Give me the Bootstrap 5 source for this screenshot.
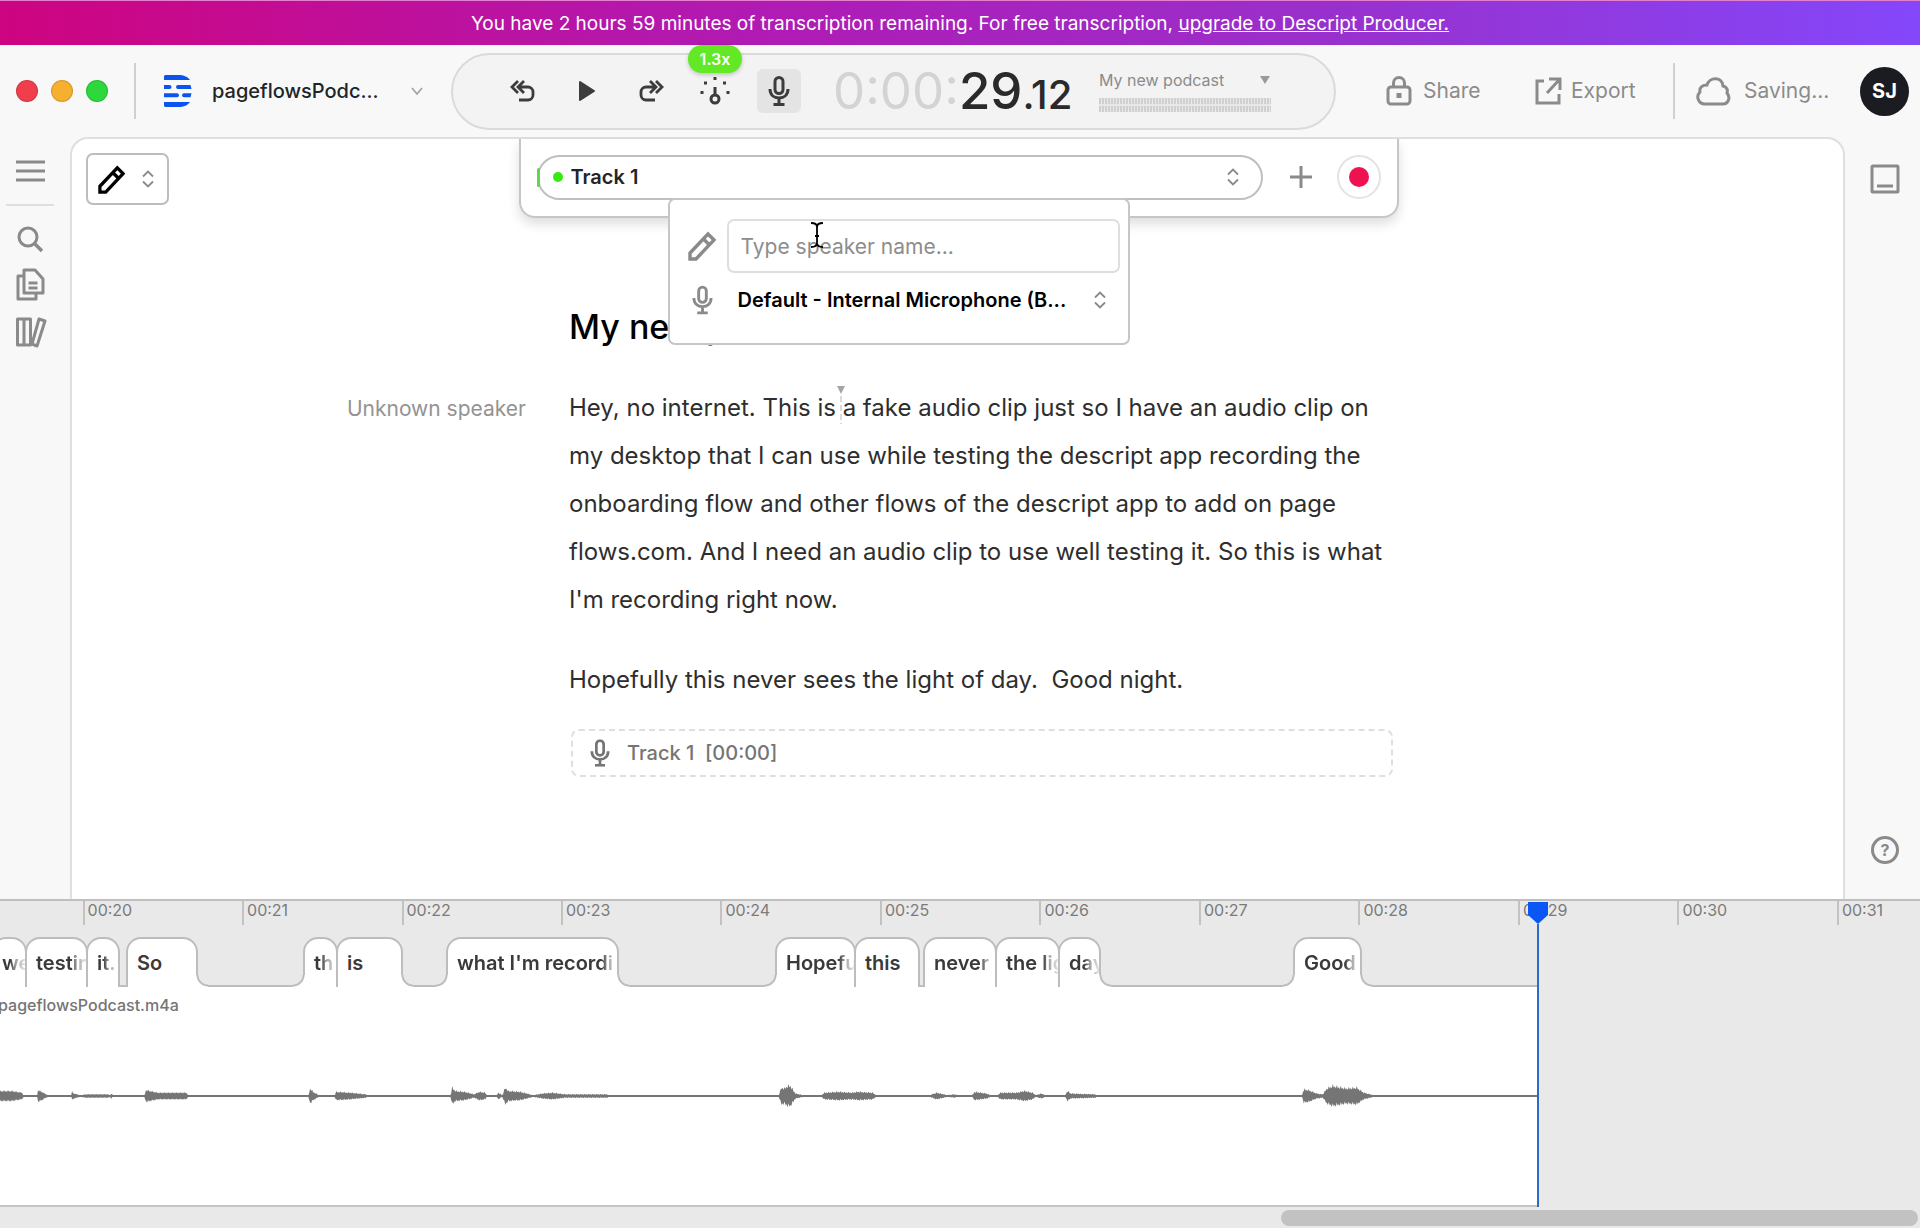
<!DOCTYPE html>
<html lang="en">
<head>
<meta charset="utf-8">
<meta name="viewport" content="width=device-width, initial-scale=1">
<title>pageflowsPodcast</title>
<link href="https://cdn.jsdelivr.net/npm/bootstrap@5.3.0/dist/css/bootstrap.min.css" rel="stylesheet">
<style>
body{font-family:Inter,"Liberation Sans",sans-serif;background:#f8f8f8;color:#2b2b2b;font-size:20px;line-height:28px}
button,select,input{font-family:inherit}
svg{display:block;flex:none}
.bare{border:0;background:none;padding:0;color:inherit}
select.bare{appearance:none;outline:0}
.promo{height:45px;padding-top:2px;background:linear-gradient(90deg,#ce0480 0%,#b01bb4 40%,#9a2fcb 68%,#8447fa 100%);border-top:1px solid #e57fd0;color:#fff;font-size:19px}
.topbar{height:92px;color:#8b8b8b}
.brand{width:451px;padding-left:16px}
.lights{gap:13px}
.light{width:22px;height:22px;border-radius:50%;border:1px solid #0002}
.project{width:216px;margin-left:16px}
.vline{width:2px;height:56px;background:#d0d0d0}
.transport{height:77px;border:2px solid #dadada;border-radius:39px;background:#f3f3f3;color:#3c3c3c;padding-left:48px}
.tools{gap:20px}
.tool{width:44px;height:44px;border-radius:6px;place-items:center}
.tool-on{background:#e4e4e4}
.speed{top:-24px;left:50%;transform:translateX(-50%);background:#62e825;color:#fff;font-size:16px;font-weight:600;line-height:28px;width:54px;border-radius:14px;box-shadow:0 2px 4px #0003}
.clock{font-size:51px;line-height:56px;font-weight:500;color:#2a2a2a;margin-left:32px;width:266px;padding-top:4px}
.clock-dim{color:#d3d3d3;font-weight:400}
.clock-sub{font-size:40px}
.meter{width:172px;height:14px;background:repeating-linear-gradient(90deg,#d0d0d0 0 2px,#e8e8e8 2px 3px)}
.meter::after{content:"";display:block;position:relative;top:6px;height:2px;background:#e8e8e8}
.comp{font-size:16px;line-height:20px;color:#8b8b8b;width:161px}
.actions{width:584px;padding-left:50px;padding-right:11px;font-size:21px}
.me{width:49px;height:49px;border-radius:50%;background:#1b1c22;color:#fff;font-weight:700;font-size:20px}
.rail{color:#8a8a8a}
.rail-l{width:70px;padding:23px 0 0 16px}
.rail-r{width:75px;padding:27px 0 34px 25px}
.rule{width:48px;height:2px;background:#dedede;margin-left:-10px}
.editor{background:#fff;border:2px solid #dfdfdf;border-bottom:0;border-radius:18px 18px 0 0}
.mode{left:14px;top:14px;width:83px;height:52px;border:2px solid #bdbdbd;border-radius:7px;background:#fff;color:#000}
.recorder-row{padding-left:2px}
.recorder{width:880px;height:79px;background:#fff;border:2px solid #c6c6c6;border-top:0;border-radius:0 0 16px 16px;box-shadow:0 6px 12px #0002;padding:0 16px 1px}
.track{height:45px;border:2px solid #bfbfbf;border-radius:23px;padding-left:14px;padding-right:21px}
.track::before{content:"";position:absolute;left:-2px;top:11px;width:3px;height:19px;border-radius:3px;background:#5fd64e}
.live{width:10px;height:10px;border-radius:50%;background:#35e912}
.rec{width:44px;height:44px;border:2px solid #e3e3e3;border-radius:50%;background:#fff;place-items:center}
.rec i{width:20px;height:20px;border-radius:50%;background:#ee1250}
.pop{left:147px;top:59px;width:462px;height:147px;background:#fff;border:2px solid #c6c6c6;border-radius:7px;padding:19px 8px 0 18px;z-index:3;color:#8a8a8a}
.pop input{height:54px;border:2px solid #dedede;border-radius:7px;padding:0 12px;font-size:21px;color:#333;background:#fff;outline:0}
.pop input::placeholder{color:#8d8d8d;opacity:1}
.ibeam{left:289px;top:83px;z-index:4}
.page-grid{display:grid;grid-template-columns:minmax(0,1fr) minmax(0,828px) minmax(0,403px);column-gap:43px;padding-top:164px}
.title{font-size:34px;line-height:48px;font-weight:500;color:#000;margin-bottom:33px}
.prose{font-size:24px;line-height:48px;color:#2e2e2e;white-space:nowrap}
.prose p{margin-bottom:32px}
.speaker{font-size:21px;line-height:48px;color:#939393;padding-top:82px}
.caret-mark{left:0;top:-7px;margin-left:-6px}
.slot{margin:-7px 4px 0 2px;height:48px;border:2px dashed #dfdfdf;border-radius:8px;padding-left:17px;color:#757575;font-size:20px;font-weight:500}
.timeline{height:329px;background:#e9e9e9;border-top:2px solid #bfbfbf}
.ruler{height:36px;margin-left:4.3%}
.tick{flex:0 0 8.68%;height:24px;border-left:2px solid #c2c2c2;padding-left:3px;font-size:16px;line-height:18px;color:#7b7b7b}
.words{height:50px;border-bottom:2px solid #bdbdbd;width:80.1%}
.word{height:50px;background:#fff;border:2px solid #bdbdbd;border-bottom:0;border-radius:15px 15px 0 0;padding-left:9px;font-weight:600;font-size:20px;line-height:49px;color:#3a3a3a;flex:none;margin-right:-2px}
.word span{display:block;overflow:hidden;white-space:nowrap}
.word.cut span{-webkit-mask-image:linear-gradient(90deg,#000 calc(100% - 15px),#0007 calc(100% - 9px),#0002 100%);mask-image:linear-gradient(90deg,#000 calc(100% - 15px),#0007 calc(100% - 9px),#0002 100%)}
.fl::before,.fr::after{content:"";position:absolute;bottom:0;width:12px;height:12px}
.fl::before{left:-12px;background:radial-gradient(circle at 0 0,#e9e9e9 9px,#bdbdbd 10px,#bdbdbd 11px,#fff 12px)}
.fr::after{right:-12px;background:radial-gradient(circle at 100% 0,#e9e9e9 9px,#bdbdbd 10px,#bdbdbd 11px,#fff 12px)}
.clip{height:220px;width:80.1%;background:#fff;border-bottom:2px solid #c4c4c4;font-size:16px;font-weight:500;line-height:20px;color:#757575}
.clip-name{margin-left:-2px;padding-top:8px}
.wave{top:79px;left:0}
.head{left:80.1%;top:1px;width:20px;margin-left:-10px}
.head i{width:2px;height:283px;background:#2d6cc4}
.bar{height:16px;width:637px;border-radius:8px;background:#c2c2c2;margin:3px 2px 0 auto}
</style>
<script src="https://cdn.jsdelivr.net/npm/bootstrap@5.3.0/dist/js/bootstrap.bundle.min.js"></script>
</head>
<body class="vh-100 d-flex flex-column overflow-hidden">
<svg class="d-none">
 <symbol id="updown" viewBox="0 0 14 18"><path d="M2 6.500 7 1.500l5 5M2 11.500l5 5 5-5" fill="none" stroke="#8a8a8a" stroke-width="1.800"/></symbol>
 <symbol id="mic" viewBox="0 0 22 30"><rect x="7" y="1.500" width="8" height="16" rx="4" fill="none" stroke="currentColor" stroke-width="3"/><path d="M2 13c0 6 4 9 9 9s9-3 9-9M11 22v6M5.500 28.500h11" fill="none" stroke="currentColor" stroke-width="3"/></symbol>
 <symbol id="pencil" viewBox="0 0 28 30"><path d="M2 28v-6L20 3l6 6L8 28zM15.500 8l6 6" fill="none" stroke="currentColor" stroke-width="3.400"/></symbol>
 <symbol id="undo" viewBox="0 0 26 22"><path d="M8 1 2 7l6 6M14 1 8 7l6 6M9 7h9a5 5 0 0 1 5 5v3a5 5 0 0 1-5 5H9" fill="none" stroke="currentColor" stroke-width="2.800"/></symbol>
</svg>

<div class="promo d-flex align-items-center justify-content-center flex-shrink-0"><span class="text-nowrap">You have 2 hours 59 minutes of transcription remaining. For free transcription, <a href="#" class="text-white">upgrade to Descript Producer.</a></span></div>

<header class="topbar d-flex align-items-center flex-shrink-0">
 <div class="brand d-flex align-items-center flex-shrink-0">
  <span class="lights d-flex"><i class="light" style="background:#f03e4d"></i><i class="light" style="background:#f6b02f"></i><i class="light" style="background:#2dd83c"></i></span>
  <span class="vline" style="margin-left:26px"></span>
  <svg style="margin-left:28px" width="28" height="32" viewBox="0 0 28 32" fill="#0b55ee"><path d="M1 0h13c6 0 10 2 12 5H0V1zM0 27h26c-2 3-6 5-12 5H1l-1-1z"/><path d="M0 10h5.500a2 2 0 0 1 0 4H0zM14 10h12.500l1 4H14a2 2 0 0 1 0-4zM0 18.300h13a2 2 0 0 1 0 4H0zM20 18.300h7.500l-1 4H20a2 2 0 0 1 0-4z"/></svg>
  <button class="bare project d-flex align-items-center justify-content-between text-dark"><span class="fw-medium ps-1">pageflowsPodc...</span><svg width="14" height="9" viewBox="0 0 14 9"><path d="m2 1 5 6 5-6" fill="none" stroke="#a0a0a0" stroke-width="1.600"/></svg></button>
 </div>
 <div class="transport d-flex align-items-center flex-grow-1">
  <div class="tools d-flex align-items-center">
   <button class="bare tool d-grid" aria-label="Back"><svg width="26" height="22"><use href="#undo"/></svg></button>
   <button class="bare tool d-grid" aria-label="Play"><svg width="18" height="22" viewBox="0 0 18 22"><path d="M2 2v18l14-9z" fill="currentColor" stroke="currentColor" stroke-width="2" stroke-linejoin="round"/></svg></button>
   <button class="bare tool d-grid" aria-label="Forward"><svg width="26" height="22" viewBox="0 0 26 22"><g transform="matrix(-1 0 0 1 26 0)"><use href="#undo"/></g></svg></button>
   <button class="bare tool d-grid position-relative" aria-label="Speed"><svg width="30" height="30" viewBox="0 0 30 30" fill="currentColor"><path d="M13.500 1h3v3h-3zM4 5.500h3v3H4zM23 5.500h3v3h-3zM.5 15h3v3h-3zM26.500 15h3v3h-3zM13.500 11h3v8h-3z"/><circle cx="15" cy="23" r="4" fill="none" stroke="currentColor" stroke-width="3"/></svg><span class="speed position-absolute">1.3x</span></button>
   <button class="bare tool tool-on d-grid" aria-label="Record"><svg width="22" height="30"><use href="#mic"/></svg></button>
  </div>
  <div class="clock text-nowrap"><span class="clock-dim">0:00:</span>29<span class="clock-sub">.12</span></div>
  <div>
   <div class="d-flex align-items-center mb-2"><select class="bare comp" aria-label="Composition"><option>My new podcast</option></select><svg width="10" height="8" viewBox="0 0 10 8"><path d="M0 0h10L5 8z" fill="#9a9a9a"/></svg></div>
   <div class="meter"></div>
  </div>
 </div>
 <div class="actions d-flex align-items-center flex-shrink-0">
  <button class="bare d-flex align-items-center text-start" style="width:149px;gap:11px"><svg width="26" height="30" viewBox="0 0 26 30"><path d="M7.500 11V7a5.500 5.500 0 0 1 11 0v4" fill="none" stroke="currentColor" stroke-width="3"/><rect x="2" y="11" width="22" height="17" rx="3" fill="none" stroke="currentColor" stroke-width="3"/><path d="M10.500 17h5v5h-5z" fill="currentColor"/></svg>Share</button>
  <button class="bare d-flex align-items-center" style="width:138px;gap:9px"><svg width="27" height="28" viewBox="0 0 27 28"><path d="M9 4H2v22h22V17M14 2h11v11M24 3 12 16" fill="none" stroke="currentColor" stroke-width="3"/></svg>Export</button>
  <span class="vline"></span>
  <span class="d-flex align-items-center flex-grow-1" style="gap:13px;padding-left:20px"><svg width="36" height="30" viewBox="0 0 36 30"><path d="M9 28a7 7 0 0 1-4-12c-1-5 3-7 7-7 2-8 15-9 16 1 4 1 5 4 4 7 4 5 1 11-4 11z" fill="none" stroke="currentColor" stroke-width="3"/></svg>Saving...</span>
  <button class="bare me">SJ</button>
 </div>
</header>

<main class="d-flex flex-grow-1 overflow-hidden">
 <nav class="rail rail-l flex-shrink-0">
  <svg width="29" height="22" viewBox="0 0 29 22"><path d="M0 2h29M0 11h29M0 20h29" stroke="currentColor" stroke-width="3"/></svg>
  <div class="rule" style="margin-top:22px"></div>
  <svg width="28" height="28" viewBox="0 0 28 28" style="margin-top:20px"><circle cx="12" cy="11" r="9" fill="none" stroke="currentColor" stroke-width="3"/><path d="m18 17 8 8" stroke="currentColor" stroke-width="3.500"/></svg>
  <svg width="30" height="34" viewBox="0 0 30 34" style="margin-top:14px"><path d="M8 2h11l8 9v14H8zM8 8H2v23h18v-6M12.500 15h9M12.500 20h9" fill="none" stroke="currentColor" stroke-width="3" stroke-linejoin="round"/></svg>
  <svg width="32" height="31" viewBox="0 0 32 31" style="margin-top:15px"><path d="M1.500 2h13v26h-13zM8 2v26M23 2l6 2-8 25-5-2z" fill="none" stroke="currentColor" stroke-width="3" stroke-linejoin="round"/></svg>
 </nav>
 <section class="editor position-relative flex-grow-1">
  <button class="bare mode position-absolute d-flex align-items-center justify-content-between" style="padding:0 12px 0 9px"><svg width="29" height="29" viewBox="0 0 28 30"><use href="#pencil"/></svg><svg width="14" height="18"><use href="#updown"/></svg></button>
  <div class="recorder-row position-absolute start-0 end-0 top-0 d-flex justify-content-center">
   <div class="recorder position-relative d-flex align-items-center">
    <div class="track position-relative d-flex align-items-center flex-grow-1"><i class="live"></i><select class="bare flex-grow-1 fw-semibold ps-2 text-dark" aria-label="Track"><option>Track 1</option></select><svg width="14" height="18"><use href="#updown"/></svg></div>
    <button class="bare" aria-label="Add track" style="margin:0 25px 0 27px"><svg width="22" height="22"><path d="M11 0v22M0 11h22" stroke="#8a8a8a" stroke-width="3"/></svg></button>
    <button class="bare rec d-grid" aria-label="Record"><i></i></button>
    <div class="pop position-absolute">
     <div class="d-flex align-items-center"><label for="spk"><svg width="28" height="32" viewBox="0 0 28 30"><use href="#pencil"/></svg></label><input id="spk" class="flex-grow-1" style="margin-left:11px" placeholder="Type speaker name..."></div>
     <div class="d-flex align-items-center" style="padding:12px 13px 0 4px"><label for="dev"><svg width="21" height="30"><use href="#mic"/></svg></label><select id="dev" class="bare flex-grow-1 text-black fw-semibold" style="margin-left:25px"><option>Default - Internal Microphone (B...</option></select><svg width="14" height="18"><use href="#updown"/></svg></div>
    </div>
    <svg class="ibeam position-absolute" width="14" height="26" viewBox="0 0 14 26"><path d="M1 1c4 0 6 1 6 4v16c0 3-2 4-6 4M13 1c-4 0-6 1-6 4v16c0 3 2 4 6 4M5 14h4" fill="none" stroke="#000" stroke-width="1.800"/></svg>
   </div>
  </div>
  <div class="page-grid">
   <div class="speaker text-end">Unknown speaker</div>
   <article>
    <h1 class="title">My new podcast</h1>
    <div class="prose">
     <p>Hey, no internet. This is <span class="position-relative"><svg class="caret-mark position-absolute" width="8" height="38" viewBox="0 0 8 38"><path d="M0 0h8L4 8z" fill="#a5a5a5"/><path d="M4 10v28" stroke="#b5b5b5" stroke-dasharray="6 3"/></svg>a</span> fake audio clip just so I have an audio clip on<br>my desktop that I can use while testing the descript app recording the<br>onboarding flow and other flows of the descript app to add on page<br>flows.com. And I need an audio clip to use well testing it. So this is what<br>I'm recording right now.</p>
     <p>Hopefully this never sees the light of day.&nbsp; Good night.</p>
    </div>
    <div class="slot d-flex align-items-center"><svg width="20" height="28" viewBox="0 0 22 30"><use href="#mic"/></svg><span style="margin-left:17px">Track 1 &nbsp;[00:00]</span></div>
   </article>
  </div>
 </section>
 <aside class="rail rail-r flex-shrink-0 d-flex flex-column justify-content-between">
  <svg width="30" height="30" viewBox="0 0 30 30"><rect x="2" y="2" width="26" height="26" rx="1" fill="none" stroke="currentColor" stroke-width="3"/><path d="M7 22h16" stroke="currentColor" stroke-width="3"/></svg>
  <svg width="30" height="30" viewBox="0 0 30 30"><circle cx="15" cy="15" r="12.500" fill="none" stroke="currentColor" stroke-width="3"/><text x="15" y="21" text-anchor="middle" font-size="16" font-weight="700" fill="currentColor">?</text></svg>
 </aside>
</main>

<footer class="timeline position-relative flex-shrink-0">
 <div class="ruler d-flex" id="ruler"></div>
 <div class="words d-flex" id="words"></div>
 <div class="clip position-relative"><div class="clip-name">pageflowsPodcast.m4a</div>
  <svg class="wave position-absolute" width="100%" height="60" viewBox="0 -30 1537 60" preserveAspectRatio="none"><path d="M0 0H1537" stroke="#757575" stroke-width="2"/><path id="wave" fill="#757575"/></svg>
 </div>
 <div class="bar"></div>
 <div class="head position-absolute d-flex flex-column align-items-center"><svg width="20" height="22" viewBox="0 0 20 22"><path d="M0 0h20v13L10 22 0 13z" fill="#0a57f5"/></svg><i></i></div>
</footer>
<script>
const ruler=document.getElementById('ruler');
for(let s=20;s<32;s++)ruler.insertAdjacentHTML('beforeend',`<div class="tick">00:${s}</div>`);
// label, start, end, flags: l/r = flared foot on that side, c = text fades out
const words=[["we",-9,25,"c"],["testin",25,86,"c"],["it.",86,118,"c"],["So",126,196,"r"],["th",303,336,"lc"],["is",336,401,"r"],["what I'm recordi",446,617,"lrc"],["Hopefu",775,854,"lc"],["this",854,918,""],["never",923,995,"c"],["the lig",995,1058,"c"],["day",1058,1099,"rc"],["Good",1293,1360,"lrc"]];
let pos=0;
for(const [t,a,b,f] of words){
 document.getElementById('words').insertAdjacentHTML('beforeend',`<div class="word position-relative ${f.includes('l')?'fl ':''}${f.includes('r')?'fr ':''}${f.includes('c')?'cut':''}" style="margin-left:${a-pos}px;width:${b-a+2}px"><span>${t}</span></div>`);
 pos=b;
}
// loudness envelopes: [x, amplitude] pairs, one list for each burst
const bursts=[[[0,6],[12,6],[22,4],[24,0]],[[37,0],[38,7],[42,5],[46,2],[51,0]],[[71,0],[72,5],[74,3],[80,1],[86,2],[108,2],[110,1],[111,3],[114,0]],[[144,0],[146,7],[150,6],[158,4],[186,4],[189,0]],[[308,0],[310,9],[313,5],[320,0]],[[334,0],[336,5],[350,4],[366,2],[367,0]],[[450,0],[452,10],[455,6],[464,5],[474,2],[479,5],[485,4],[487,0]],[[496,0],[498,4],[502,1],[505,10],[508,6],[520,5],[533,1],[542,3],[552,4],[565,2],[607,2],[609,0]],[[778,0],[781,10],[784,9],[787,12],[790,12],[795,3],[803,1],[804,0]],[[820,0],[824,4],[838,5],[852,4],[858,5],[872,4],[877,0]],[[927,0],[936,4],[947,1],[953,2],[958,1],[959,0]],[[971,0],[974,5],[986,3],[990,1],[996,0],[1000,4],[1016,4],[1024,6],[1032,4],[1035,1],[1041,3],[1046,0]],[[1064,0],[1067,6],[1070,3],[1095,2],[1096,0]],[[1301,0],[1303,8],[1308,7],[1316,3],[1322,2],[1326,9],[1332,12],[1345,9],[1356,10],[1363,4],[1373,1],[1376,0]]];
let d='';
for(const e of bursts){
 let up='',dn='';
 for(let x=e[0][0];x<=e[e.length-1][0];x++){
  let i=1;while(i<e.length-1&&e[i][0]<x)i++;
  const [x0,y0]=e[i-1],[x1,y1]=e[i];
  const y=y0+(y1-y0)*(x-x0)/(x1-x0), j=[1,.7,.85,.65][x%4];
  up+=`L${x} ${-(y*j).toFixed(1)}`;dn=`L${x} ${(y*(1.6-j)).toFixed(1)}`+dn;
 }
 d+='M'+up.slice(1)+dn+'z';
}
document.getElementById('wave').setAttribute('d',d);
</script>
</body>
</html>
